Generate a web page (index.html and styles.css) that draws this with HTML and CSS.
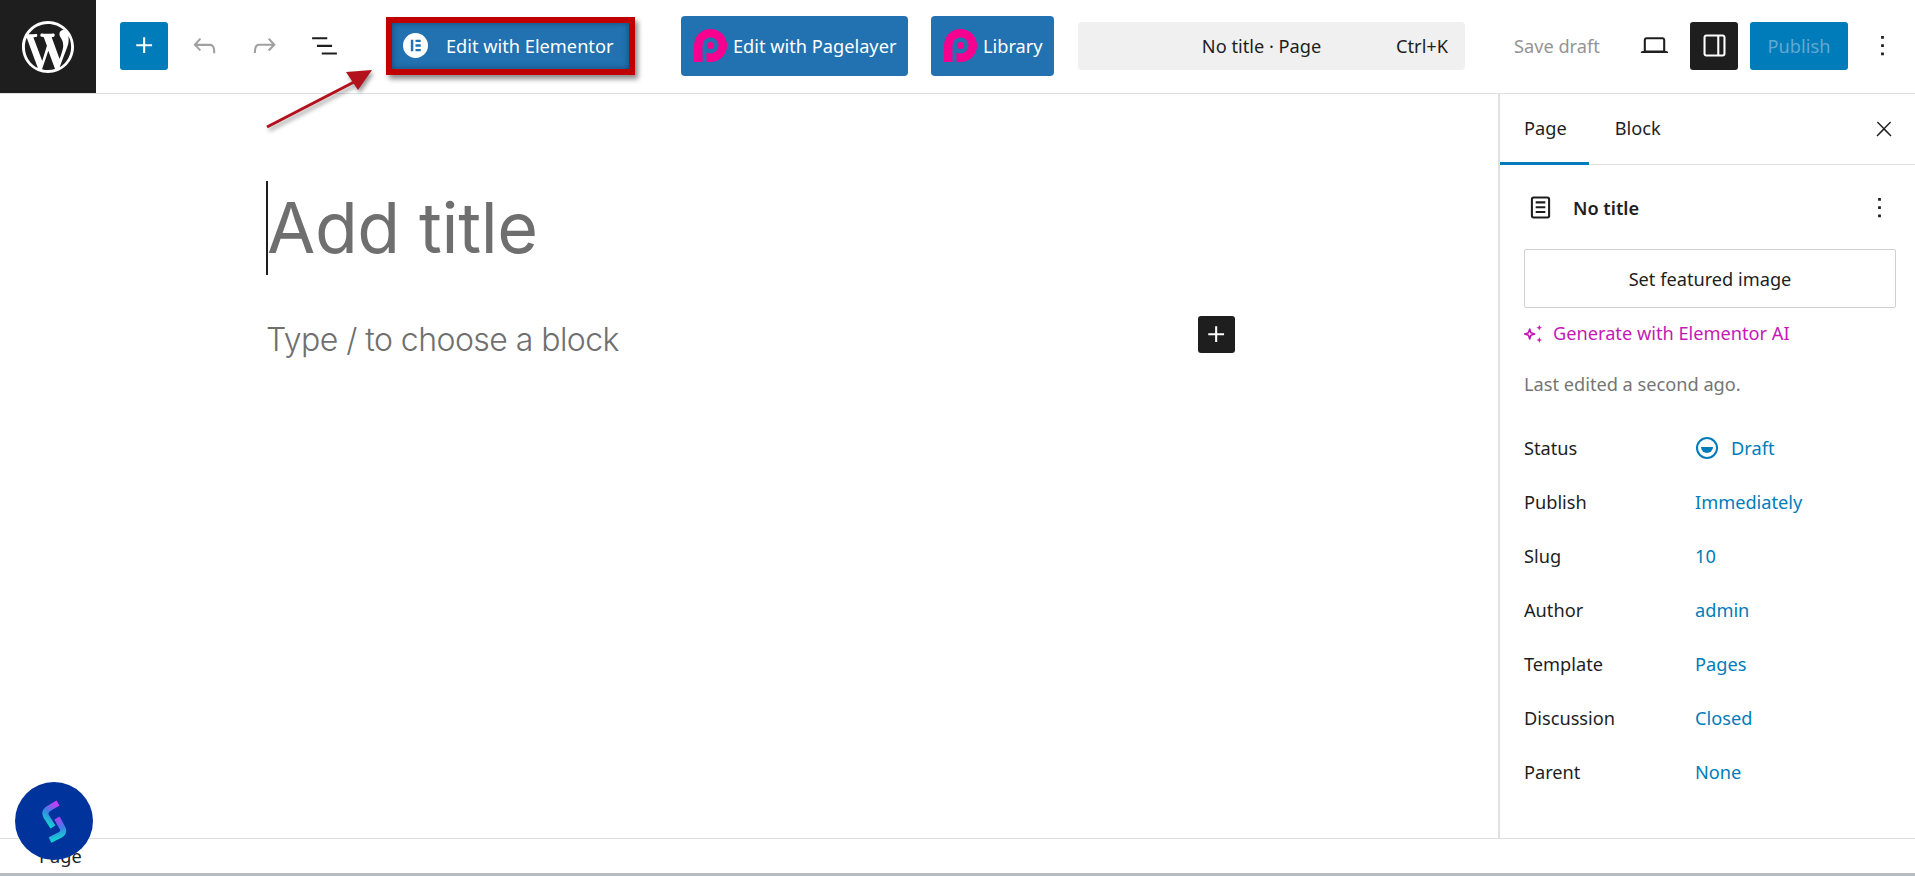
FILE: index.html
```html
<!DOCTYPE html>
<html lang="en">
<head>
  <meta charset="UTF-8" />
  <title>Edit Page</title>
  <link rel="stylesheet" href="styles.css">
</head>
<body>
  <div class="app">
    <header class="topbar">
      <a class="wp-logo">
        <svg viewBox="0 0 20 20" width="52" height="52"><path fill="#fff" d="M20 10c0-5.51-4.49-10-10-10C4.48 0 0 4.49 0 10c0 5.52 4.48 10 10 10 5.51 0 10-4.48 10-10zM7.78 15.37L4.37 6.22c.55-.02 1.17-.08 1.17-.08.5-.06.44-1.13-.06-1.11 0 0-1.45.11-2.37.11-.18 0-.37 0-.58-.01C4.12 2.69 6.87 1.11 10 1.11c2.33 0 4.45.87 6.05 2.34-.68-.11-1.65.39-1.65 1.58 0 .74.45 1.36.9 2.1.35.61.55 1.36.55 2.46 0 1.49-1.4 5-1.4 5l-3.03-8.37c.54-.02.82-.17.82-.17.5-.05.44-1.25-.06-1.22 0 0-1.44.12-2.38.12-.87 0-2.33-.12-2.33-.12-.5-.03-.56 1.2-.06 1.22l.92.08 1.26 3.41zM17.41 10c.24-.64.74-1.87.43-4.25.7 1.29 1.05 2.71 1.05 4.25 0 3.29-1.73 6.24-4.4 7.78.97-2.59 1.94-5.2 2.92-7.78zM6.1 18.09C3.12 16.65 1.11 13.53 1.11 10c0-1.3.23-2.48.72-3.59C3.25 10.3 4.67 14.2 6.1 18.09zm4.03-6.63l2.58 6.98c-.86.29-1.76.45-2.71.45-.79 0-1.57-.11-2.29-.33.81-2.38 1.62-4.74 2.42-7.1z"/></svg>
      </a>

      <div class="tools">
        <button class="icon-btn add-btn">
          <svg viewBox="0 0 24 24" width="33" height="33"><path fill="#fff" d="M11 12.5V17.5H12.5V12.5H17.5V11H12.5V6H11V11H6V12.5H11Z"/></svg>
        </button>
        <button class="icon-btn">
          <svg viewBox="0 0 24 24" width="33" height="33"><path fill="#a0a0a0" d="M18.3 11.7c-.6-.6-1.4-.9-2.3-.9H6.7l2.9-3.3-1.1-1-4.5 5L8.5 16l1-1-2.7-2.7H16c.5 0 .9.2 1.3.5 1 1 1 3.4 1 4.5v.3h1.5v-.2c0-1.5 0-4.3-1.5-5.7z"/></svg>
        </button>
        <button class="icon-btn">
          <svg viewBox="0 0 24 24" width="33" height="33"><path fill="#a0a0a0" d="M15.6 6.5l-1.1 1 2.9 3.3H8c-.9 0-1.7.3-2.3.9-1.4 1.5-1.4 4.2-1.4 5.6v.2h1.5v-.3c0-1.1 0-3.5 1-4.5.3-.3.7-.5 1.3-.5h9.2L14.5 15l1.1 1.1 4.6-4.6-4.6-5z"/></svg>
        </button>
        <button class="icon-btn">
          <svg viewBox="0 0 24 24" width="33" height="33"><path fill="#1e1e1e" d="M3 6h11v1.5H3V6zm3.5 5.5h11V13h-11v-1.5zM21 17H10v1.5h11V17z"/></svg>
        </button>
      </div>

      <button class="elementor-btn">
        <svg viewBox="0 0 24 24" width="25" height="25"><circle cx="12" cy="12" r="12" fill="#fff"/><path fill="#2271b1" d="M7.5 6.5h2.4v11H7.5zM12 6.5h5v2.2h-5zM12 10.9h5v2.2h-5zM12 15.3h5v2.2h-5z"/></svg>
        <span>Edit with Elementor</span>
      </button>

      <button class="pl-btn pl-first">
        <svg viewBox="0 0 33 33" width="33" height="33"><path fill="#f7008f" d="M0 33V16.5A16.5 16.5 0 1 1 16.5 33H12.5V23.43A8 8 0 1 0 8.5 16.5V33Z"/><circle cx="16.5" cy="16.5" r="3.5" fill="#f7008f"/></svg>
        <span>Edit with Pagelayer</span>
      </button>
      <button class="pl-btn pl-second">
        <svg viewBox="0 0 33 33" width="33" height="33"><path fill="#f7008f" d="M0 33V16.5A16.5 16.5 0 1 1 16.5 33H12.5V23.43A8 8 0 1 0 8.5 16.5V33Z"/><circle cx="16.5" cy="16.5" r="3.5" fill="#f7008f"/></svg>
        <span>Library</span>
      </button>

      <div class="command-bar">
        <span class="command-title">No title · Page</span>
        <span class="command-key">Ctrl+K</span>
      </div>

      <div class="actions">
        <span class="save-draft">Save draft</span>
        <button class="icon-btn laptop-btn">
          <svg viewBox="0 0 24 24" width="33" height="33"><path fill="#1e1e1e" d="M20.5 16h-.7V8c0-1.1-.9-2-2-2H6.2c-1.1 0-2 .9-2 2v8h-.7c-.8 0-1.5.7-1.5 1.5h20c0-.8-.7-1.5-1.5-1.5zM5.7 8c0-.3.2-.5.5-.5h11.6c.3 0 .5.2.5.5v7.6H5.7V8z"/></svg>
        </button>
        <button class="icon-btn panel-btn">
          <svg viewBox="0 0 24 24" width="33" height="33"><path fill="#fff" d="M18 4H6c-1.1 0-2 .9-2 2v12c0 1.1.9 2 2 2h12c1.1 0 2-.9 2-2V6c0-1.1-.9-2-2-2zm-4 14.5H6c-.3 0-.5-.2-.5-.5V6c0-.3.2-.5.5-.5h8v13zm4.5-.5c0 .3-.2.5-.5.5h-2.5v-13H18c.3 0 .5.2.5.5v12z"/></svg>
        </button>
        <button class="publish-btn">Publish</button>
        <button class="icon-btn more-btn">
          <svg viewBox="0 0 24 24" width="33" height="33"><path fill="#1e1e1e" d="M13 19h-2v-2h2v2zm0-6h-2v-2h2v2zm0-6h-2V5h2v2z"/></svg>
        </button>
      </div>
    </header>

    <div class="main">
      <main class="editor">
        <div class="title-line">
          <h1 class="post-title">Add title</h1>
        </div>
        <div class="block-line">
          <p class="block-hint">Type / to choose a block</p>
          <button class="inline-add">
            <svg viewBox="0 0 24 24" width="33" height="33"><path fill="#fff" d="M11 12.5V17.5H12.5V12.5H17.5V11H12.5V6H11V11H6V12.5H11Z"/></svg>
          </button>
        </div>
      </main>

      <aside class="sidebar">
        <div class="tabs">
          <span class="tab active">Page</span>
          <span class="tab">Block</span>
          <svg class="close-icon" viewBox="0 0 24 24" width="24" height="24"><path fill="#1e1e1e" d="M13 11.8l6.1-6.3-1-1-6.1 6.2-6.1-6.2-1 1 6.1 6.3-6.5 6.7 1 1 6.5-6.6 6.5 6.6 1-1z"/></svg>
        </div>

        <div class="panel">
          <div class="doc-row">
            <svg viewBox="0 0 24 24" width="33" height="33"><path fill="#1e1e1e" d="M15.5 7.5h-7V9h7V7.5Zm-7 3.5h7v1.5h-7V11Zm7 3.5h-7V16h7v-1.5Z"/><path fill="#1e1e1e" d="M17 4H7a2 2 0 0 0-2 2v12a2 2 0 0 0 2 2h10a2 2 0 0 0 2-2V6a2 2 0 0 0-2-2ZM7 5.5h10a.5.5 0 0 1 .5.5v12a.5.5 0 0 1-.5.5H7a.5.5 0 0 1-.5-.5V6a.5.5 0 0 1 .5-.5Z"/></svg>
            <strong>No title</strong>
            <svg class="doc-more" viewBox="0 0 24 24" width="33" height="33"><path fill="#1e1e1e" d="M13 19h-2v-2h2v2zm0-6h-2v-2h2v2zm0-6h-2V5h2v2z"/></svg>
          </div>

          <button class="featured-btn">Set featured image</button>

          <a class="ai-link">
            <svg viewBox="0 0 20 20" width="20" height="20">
              <path d="M5.7 6L6.9 9.8L10.7 11L6.9 12.2L5.7 16L4.5 12.2L0.7 11L4.5 9.8Z" fill="none" stroke="#c419b5" stroke-width="1.6" stroke-linejoin="round"/>
              <path fill="#c419b5" d="M15.3 1.8L16.1 3.9L18.2 4.7L16.1 5.5L15.3 7.6L14.5 5.5L12.4 4.7L14.5 3.9ZM15.3 14.1L16.1 16.2L18.2 17L16.1 17.8L15.3 19.9L14.5 17.8L12.4 17L14.5 16.2Z"/>
            </svg>
            <span>Generate with Elementor AI</span>
          </a>

          <p class="last-edited">Last edited a second ago.</p>

          <dl class="meta">
            <div class="meta-row">
              <dt>Status</dt>
              <dd class="status-value">
                <svg viewBox="0 0 24 24" width="24" height="24"><circle cx="12" cy="12" r="10" fill="none" stroke="#007cba" stroke-width="2"/><path fill="#007cba" d="M6 11h12a6 6 0 0 1-12 0z"/></svg>
                Draft
              </dd>
            </div>
            <div class="meta-row"><dt>Publish</dt><dd>Immediately</dd></div>
            <div class="meta-row"><dt>Slug</dt><dd>10</dd></div>
            <div class="meta-row"><dt>Author</dt><dd>admin</dd></div>
            <div class="meta-row"><dt>Template</dt><dd>Pages</dd></div>
            <div class="meta-row"><dt>Discussion</dt><dd>Closed</dd></div>
            <div class="meta-row"><dt>Parent</dt><dd>None</dd></div>
          </dl>
        </div>
      </aside>
    </div>

    <footer class="statusbar">Page</footer>
  </div>

  <!-- annotation arrow drawn over the screenshot -->
  <svg class="arrow" viewBox="0 0 130 75" width="130" height="75">
    <path d="M3 67L92 21" stroke="#b3121d" stroke-width="3" fill="none"/>
    <path d="M108 10L82 12L94 30z" fill="#b3121d"/>
  </svg>

  <div class="chat-bubble">
    <svg viewBox="0 0 34 51" width="34" height="51">
      <defs>
        <linearGradient id="sTop" x1="0.8" y1="0" x2="0.4" y2="1">
          <stop offset="0" stop-color="#c93bf2"/><stop offset="0.5" stop-color="#3f7fe8"/><stop offset="1" stop-color="#12d6cf"/>
        </linearGradient>
        <linearGradient id="sBottom" x1="0.3" y1="0" x2="0.5" y2="1">
          <stop offset="0" stop-color="#b83cf2"/><stop offset="0.55" stop-color="#3f7fe8"/><stop offset="1" stop-color="#10d6d0"/>
        </linearGradient>
      </defs>
      <path d="M21 7L11 13Q7 16 9 20L16 31" fill="none" stroke="url(#sTop)" stroke-width="6"/>
      <path d="M20 22L26 33Q27 37 23 39L13 44" fill="none" stroke="url(#sBottom)" stroke-width="6"/>
    </svg>
  </div>
</body>
</html>
```

FILE: styles.css
```css
* {
  box-sizing: border-box;
  margin: 0;
  padding: 0;
}

html, body {
  height: 876px;
  overflow: hidden;
}

body {
  background: #fff;
  color: #1e1e1e;
  font-family: "Noto Sans", "Open Sans", sans-serif;
  font-size: 18.2px;
}

button {
  border: none;
  background: none;
  font: inherit;
  color: inherit;
}

.app {
  height: 876px;
  display: flex;
  flex-direction: column;
  border-bottom: 3px solid #b5bcc2;
}

/* top bar */
.topbar {
  height: 94px;
  flex: none;
  display: flex;
  align-items: center;
  padding-bottom: 2px;
  border-bottom: 1px solid #e0e0e0;
}

.wp-logo {
  width: 96px;
  height: 93px;
  flex: none;
  align-self: flex-start;
  background: #1e1e1e;
  display: flex;
  align-items: center;
  justify-content: center;
}

.tools {
  display: flex;
  align-items: center;
  gap: 12px;
  margin-left: 24px;
}

.icon-btn {
  width: 48px;
  height: 48px;
  flex: none;
  border-radius: 3px;
  display: flex;
  align-items: center;
  justify-content: center;
}

.add-btn {
  background: #007cba;
}

.elementor-btn {
  width: 249px;
  height: 58px;
  margin-left: 38px;
  flex: none;
  display: flex;
  align-items: center;
  gap: 18px;
  padding-left: 11px;
  background: #2271b1;
  color: #fff;
  border: 6px solid #c00000;
  box-shadow: 3px 4px 5px rgba(0, 0, 0, 0.45), inset 0 0 6px rgba(0, 30, 60, 0.5);
}

.pl-btn {
  height: 60px;
  flex: none;
  display: flex;
  align-items: center;
  gap: 6px;
  padding-left: 13px;
  background: #2271b1;
  color: #fff;
  border-radius: 4px;
}

.pl-first {
  width: 227px;
  margin-left: 46px;
}

.pl-second {
  width: 123px;
  margin-left: 23px;
}

.command-bar {
  width: 387px;
  height: 48px;
  margin-left: 24px;
  flex: none;
  position: relative;
  display: flex;
  align-items: center;
  justify-content: center;
  background: #f0f0f0;
  border-radius: 4px;
}

.command-title {
  margin-right: 20px;
}

.command-key {
  position: absolute;
  right: 17px;
}

.actions {
  display: flex;
  align-items: center;
  margin-left: 49px;
}

.save-draft {
  width: 116px;
  color: #949494;
}

.laptop-btn {
  margin-right: 12px;
}

.panel-btn {
  background: #1e1e1e;
}

.publish-btn {
  width: 98px;
  height: 48px;
  margin-left: 12px;
  background: #007cba;
  color: #62a9d2;
  border-radius: 3px;
}

.more-btn {
  margin-left: 10px;
}

/* main area */
.main {
  flex: 1;
  min-height: 0;
  display: flex;
}

.editor {
  flex: 1;
  padding: 87px 0 0 266px;
}

.title-line {
  width: 760px;
  height: 94px;
  border-left: 2px solid #1e1e1e;
}

.post-title {
  font-family: Inter, "Noto Sans", sans-serif;
  font-size: 70px;
  font-weight: 400;
  line-height: 94px;
  color: #6f6f6f;
  letter-spacing: -0.4px;
  margin-left: -1px;
}

.block-line {
  width: 969px;
  margin-top: 39px;
  display: flex;
  align-items: center;
  justify-content: space-between;
}

.block-hint {
  font-family: Inter, "Noto Sans", sans-serif;
  font-size: 32px;
  font-weight: 300;
  color: #6f6f6f;
  letter-spacing: -0.55px;
  padding-top: 6px;
}

.inline-add {
  width: 37px;
  height: 37px;
  background: #1e1e1e;
  border-radius: 3px;
  display: flex;
  align-items: center;
  justify-content: center;
  margin-top: -5px;
}

/* settings sidebar */
.sidebar {
  width: 417px;
  flex: none;
  border-left: 2px solid #e0e0e0;
}

.tabs {
  height: 71px;
  display: flex;
  align-items: center;
  border-bottom: 1px solid #e0e0e0;
}

.tab {
  height: 71px;
  line-height: 69px;
  padding: 0 22px 0 24px;
  margin-right: 2px;
}

.tab.active {
  border-bottom: 3px solid #007cba;
}

.close-icon {
  margin-left: auto;
  margin-right: 19px;
}

.panel {
  padding: 0 19px 0 24px;
}

.doc-row {
  height: 33px;
  margin-top: 26px;
  display: flex;
  align-items: center;
  gap: 16px;
}

.doc-row strong {
  font-weight: 600;
}

.doc-more {
  margin-left: auto;
}

.featured-btn {
  width: 100%;
  height: 59px;
  margin-top: 25px;
  border: 1.5px solid #d0d0d0;
  border-radius: 2px;
  background: #fff;
}

.ai-link {
  display: flex;
  align-items: center;
  gap: 9px;
  margin-top: 12px;
  height: 26px;
  color: #c419b5;
}

.last-edited {
  margin-top: 25px;
  line-height: 26px;
  color: #757575;
}

.meta {
  margin-top: 24px;
}

.meta-row {
  height: 54px;
  display: flex;
  align-items: center;
}

.meta-row dt {
  width: 171px;
}

.meta-row dd {
  color: #007cba;
}

.status-value {
  display: flex;
  align-items: center;
  gap: 12px;
}

/* bottom breadcrumb */
.statusbar {
  height: 35px;
  flex: none;
  line-height: 35px;
  padding-left: 39px;
  border-top: 1px solid #dcdcdc;
}

/* overlays */
.arrow {
  position: absolute;
  left: 264px;
  top: 60px;
  filter: drop-shadow(2px 3px 2px rgba(0, 0, 0, 0.4));
}

.chat-bubble {
  position: absolute;
  left: 15px;
  top: 782px;
  width: 78px;
  height: 78px;
  border-radius: 50%;
  background: #00339b;
  display: flex;
  align-items: center;
  justify-content: center;
}
```
